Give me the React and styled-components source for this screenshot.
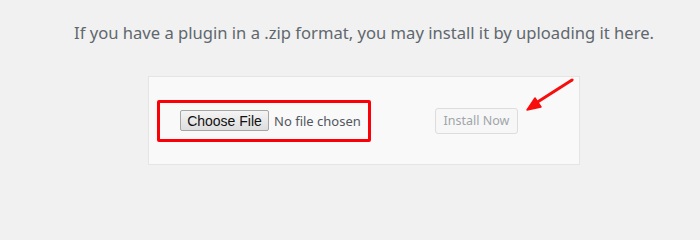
import React from "react";
import styled, { createGlobalStyle } from "styled-components";

const GlobalStyle = createGlobalStyle`
  html, body {
    margin: 0;
    padding: 0;
    background: #f1f1f1;
  }
  body {
    font-family: "Noto Sans", "Open Sans", sans-serif;
  }
`;

const Page = styled.div`
  width: 700px;
  height: 201px;
  box-sizing: border-box;
  padding: 22px 0 0 28px;
  display: flex;
  flex-direction: column;
  align-items: center;
  overflow: hidden;
`;

const Help = styled.p`
  margin: 0 0 32px;
  font-size: 16.6px;
  line-height: 22px;
  color: #60676e;
  white-space: nowrap;
`;

const Card = styled.form`
  position: relative;
  width: 432px;
  height: 89px;
  box-sizing: border-box;
  background: #f9f9f9;
  border: 1px solid #e5e5e5;
  display: flex;
  align-items: center;
  padding-left: 8px;
  gap: 64px;
`;

const Highlight = styled.div`
  width: 214px;
  height: 42px;
  box-sizing: border-box;
  border: 3px solid #fb0007;
  border-radius: 2px;
  display: flex;
  align-items: center;
  padding-left: 20px;
  gap: 5px;
`;

const ChooseButton = styled.button`
  width: 89px;
  height: 21px;
  box-sizing: border-box;
  padding: 0;
  font-family: "Liberation Sans", Arial, sans-serif;
  font-size: 14px;
  color: #111;
  background: linear-gradient(#f4f4f4, #dedede);
  border: 1px solid #a6a6a6;
  border-radius: 2px;
`;

const FileName = styled.span`
  font-size: 13px;
  color: #50575e;
`;

const InstallButton = styled.button`
  width: 83px;
  height: 26px;
  box-sizing: border-box;
  padding: 0;
  font-family: "Noto Sans", "Open Sans", sans-serif;
  font-size: 12.5px;
  color: #a0a5aa;
  background: #f7f7f7;
  border: 1px solid #dddddd;
  border-radius: 3px;
`;

const Arrow = styled.svg`
  position: absolute;
  left: 0;
  top: 0;
  overflow: visible;
  pointer-events: none;
`;

export default function App() {
  return (
    <>
      <GlobalStyle />
      <Page>
        <Help>
          If you have a plugin in a .zip format, you may install it by uploading it here.
        </Help>
        <Card onSubmit={(e) => e.preventDefault()}>
          <Highlight>
            <ChooseButton type="button">Choose File</ChooseButton>
            <FileName>No file chosen</FileName>
          </Highlight>
          <InstallButton type="submit" disabled>
            Install Now
          </InstallButton>
          <Arrow width="432" height="89">
            <line x1="423" y1="3" x2="387" y2="26" stroke="#f80d0d" strokeWidth="3" strokeLinecap="round" />
            <polygon points="378,33 392,30 386,21" fill="#f80d0d" stroke="#f80d0d" strokeWidth="1.5" strokeLinejoin="round" />
          </Arrow>
        </Card>
      </Page>
    </>
  );
}
